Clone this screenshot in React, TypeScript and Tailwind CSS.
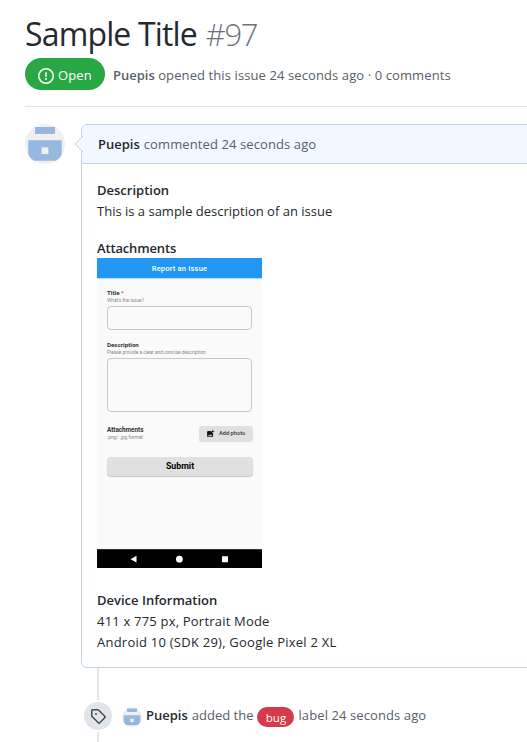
import React from "react";

function Avatar({ className }: { className: string }) {
  return (
    <svg viewBox="0 0 40 40" className={className}>
      <defs>
        <clipPath id="avatar-circle">
          <circle cx="20" cy="20" r="20" />
        </clipPath>
      </defs>
      <g clipPath="url(#avatar-circle)">
        <rect width="40" height="40" fill="#f0f0f0" />
        <path fill="#96b7de" d="M10 3h20v7H10zM3.3 16.3h33.4v20.4H3.3z" />
        <rect x="16.6" y="23.3" width="6.8" height="6.8" fill="#f0f0f0" />
      </g>
    </svg>
  );
}

function PhoneForm() {
  return (
    <div className="flex h-[310px] w-[165px] flex-col bg-[#fafafa] font-['Roboto',sans-serif] text-[#333]">
      <div className="flex h-[20px] shrink-0 items-center justify-center bg-[#2196f3] text-[7.5px] font-medium tracking-[0.2px] text-white shadow-[0_1px_1px_#bcdcf5]">
        Report an Issue
      </div>
      <div className="flex flex-1 flex-col pl-[10px] pr-[9px] pt-[11px]">
        <div className="h-[8px] text-[6.2px] font-bold leading-[8px]">
          Title <span className="text-[#f44336]">*</span>
        </div>
        <div className="h-[9px] text-[4.8px] leading-[7px] text-[#888]">What's the issue?</div>
        <div className="h-[24px] w-[145px] rounded-[4px] border border-[#c8c8c8]" />
        <div className="mt-[11px] h-[8px] text-[6.2px] font-bold leading-[8px]">Description</div>
        <div className="h-[9px] whitespace-nowrap text-[4.8px] leading-[7px] text-[#888]">
          Please provide a clear and concise description
        </div>
        <div className="h-[54px] w-[145px] rounded-[4px] border border-[#c8c8c8]" />
        <div className="mt-[14px] flex h-[16px] justify-between">
          <div>
            <div className="h-[8px] text-[6.3px] font-bold leading-[8px]">Attachments</div>
            <div className="text-[4.8px] leading-[7px] text-[#888]">.png/ .jpg format</div>
          </div>
          <div className="flex h-[15px] w-[54px] items-center rounded-[3px] bg-[#e0e0e0] pl-[7px] shadow-[0_1px_1px_#ddd]">
            <svg viewBox="0 0 24 24" className="h-[9px] w-[9px]" fill="#111">
              <path d="M19 7v2.99s-1.99.01-2 0V7h-3s.01-1.99 0-2h3V2h2v3h3v2h-3zm-3 4V8h-3V5H5c-1.1 0-2 .9-2 2v12c0 1.1.9 2 2 2h12c1.1 0 2-.9 2-2v-8h-3zM5 19l3-4 2 3 3-4 4 5H5z" />
            </svg>
            <span className="ml-[4px] whitespace-nowrap text-[5.7px] font-medium">Add photo</span>
          </div>
        </div>
        <div className="mt-[15px] flex h-[19px] w-[146px] items-center justify-center rounded-[4px] bg-[#e0e0e0] text-[8.8px] font-bold text-black shadow-[0_1px_1px_#c4c4c4]">
          Submit
        </div>
      </div>
      <div className="flex h-[19px] shrink-0 items-center border-t border-[#333] bg-black">
        <svg viewBox="0 0 165 18" className="h-[18px] w-[165px]" fill="#fff">
          <path d="M33.5 9.2l6-3.4v6.8zM125 6.3h6v6h-6z" />
          <circle cx="82.4" cy="9.2" r="3.4" />
        </svg>
      </div>
    </div>
  );
}

export default function App() {
  return (
    <div className="h-[742px] w-[527px] overflow-hidden bg-white font-['Open_Sans','Noto_Sans',sans-serif] text-[13px] text-[#24292e]">
      <header className="ml-[25px] flex h-[107px] flex-col border-b border-[#e1e4e8] pt-[14px]">
        <h1 className="h-[44px] whitespace-nowrap text-[32px] font-normal leading-[40px]">
          <span className="tracking-[-0.85px]">Sample Title</span>
          <span className="ml-[9px] text-[31px] font-light tracking-[-1.4px] text-[#6a737d]">#97</span>
        </h1>
        <div className="flex h-[32px] items-center">
          <div className="flex h-[32px] w-[80px] items-center rounded-full bg-[#28a745] pl-[13px] text-white">
            <svg viewBox="0 0 16 16" className="mt-[3px] h-[16px] w-[16px]" fill="currentColor">
              <path fillRule="evenodd" d="M8 1.5a6.5 6.5 0 100 13 6.5 6.5 0 000-13zM0 8a8 8 0 1116 0A8 8 0 010 8zm9 3a1 1 0 11-2 0 1 1 0 012 0zm-.25-6.25a.75.75 0 00-1.5 0v3.5a.75.75 0 001.5 0v-3.5z" />
            </svg>
            <span className="ml-[4px] pt-[3px] tracking-[0.1px]">Open</span>
          </div>
          <div className="ml-[8px] whitespace-nowrap pt-[3px] text-[#586069]">
            <span className="font-semibold">Puepis</span>{" "}
            <span className="tracking-[0.1px]">opened this issue 24 seconds ago · 0 comments</span>
          </div>
        </div>
      </header>

      <section className="ml-[25px] mt-[17px] flex">
        <Avatar className="h-[40px] w-[40px] shrink-0" />
        <div className="relative ml-[16px] h-[544px] w-[480px] shrink-0 rounded-[6px] border border-[#c0d3eb]">
          <div className="flex h-[39px] items-center whitespace-nowrap rounded-tl-[5px] border-b border-[#c0d3eb] bg-[#f1f8ff] pl-[16px] pt-[2px] text-[#586069]">
            <span className="mr-[4px] font-semibold text-[#24292e]">Puepis</span>
            <span className="tracking-[0.1px]">commented 24 seconds ago</span>
          </div>
          <svg viewBox="0 0 9 16" className="absolute left-[-8px] top-[11px] h-[16px] w-[9px]">
            <path d="M9 0L1 8l8 8" fill="#f1f8ff" stroke="#c0d3eb" />
          </svg>
          <div className="whitespace-nowrap pl-[15px] pt-[16px] leading-[21px]">
            <div className="font-semibold">Description</div>
            <div>This is a sample description of an issue</div>
            <div className="mt-[16px] h-[20px] font-semibold tracking-[-0.15px]">Attachments</div>
            <PhoneForm />
            <div className="mt-[22px] font-semibold">Device Information</div>
            <div className="tracking-[0.2px]">411 x 775 px, Portrait Mode</div>
            <div className="tracking-[0.24px]">Android 10 (SDK 29), Google Pixel 2 XL</div>
          </div>
        </div>
      </section>

      <section className="ml-[84px] flex h-[74px]">
        <div className="flex w-[28px] shrink-0 flex-col items-center">
          <div className="h-[32px] w-[2px] bg-[#e1e4e8]" />
          <div className="my-[2px] flex h-[28px] w-[28px] shrink-0 items-center justify-center rounded-full bg-[#e1e4e8] text-[#444d56]">
            <svg viewBox="0 0 16 16" className="h-[16px] w-[16px]" fill="currentColor">
              <path fillRule="evenodd" d="M2.5 7.775V2.75a.25.25 0 01.25-.25h5.025a.25.25 0 01.177.073l6.25 6.25a.25.25 0 010 .354l-5.025 5.025a.25.25 0 01-.354 0l-6.25-6.25a.25.25 0 01-.073-.177zm-1.5 0V2.75C1 1.784 1.784 1 2.75 1h5.025c.464 0 .91.184 1.238.513l6.25 6.25a1.75 1.75 0 010 2.474l-5.026 5.026a1.75 1.75 0 01-2.474 0l-6.25-6.25A1.75 1.75 0 011 7.775zM6 5a1 1 0 100 2 1 1 0 000-2z" />
            </svg>
          </div>
          <div className="h-[10px] w-[2px] bg-[#e1e4e8]" />
        </div>
        <div className="ml-[10px] mt-[39px] flex h-[20px] items-center whitespace-nowrap text-[#586069]">
          <Avatar className="h-[20px] w-[20px]" />
          <span className="ml-[4px] mr-[4px] pb-[2px] font-semibold text-[#24292e]">Puepis</span>
          <span className="pb-[2px]">added the</span>
          <span className="ml-[4px] mr-[4px] flex h-[20px] w-[37px] items-center justify-center rounded-full bg-[#d73a4a] pt-[2px] text-[11.5px] font-medium text-white">
            bug
          </span>
          <span className="pb-[2px] tracking-[0.1px]">label 24 seconds ago</span>
        </div>
      </section>
    </div>
  );
}
